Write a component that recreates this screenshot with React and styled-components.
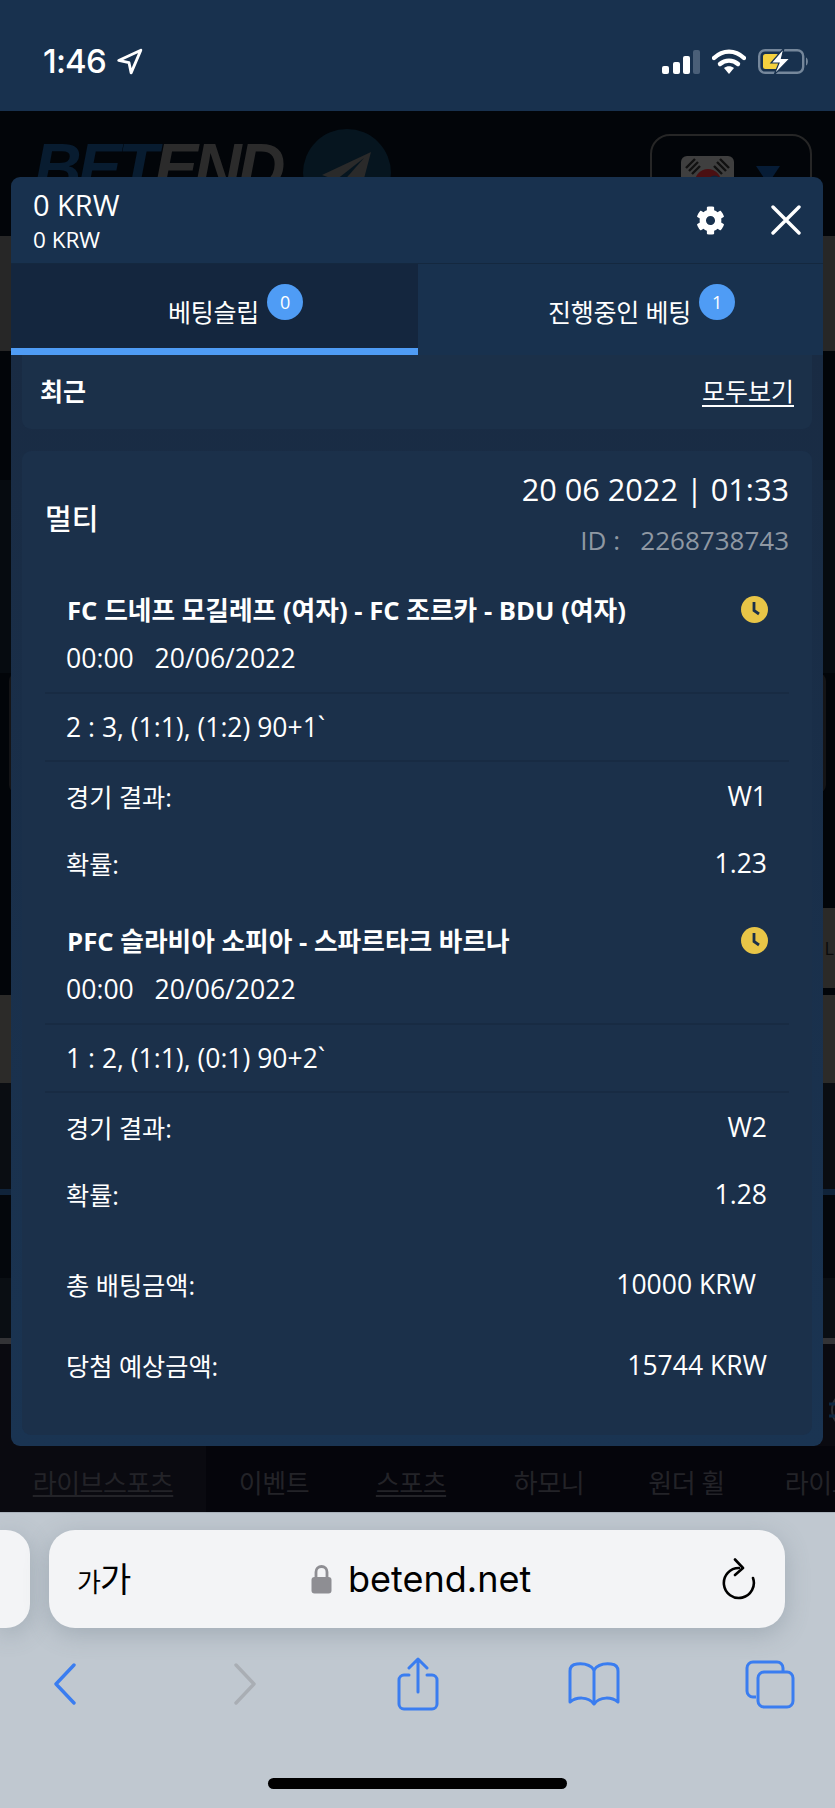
import React from "react";
import styled, { createGlobalStyle } from "styled-components";
import { FaCog } from "react-icons/fa";

const GlobalStyle = createGlobalStyle`
  html, body { margin: 0; padding: 0; background: #c0c8d0; }
  * { box-sizing: border-box; }
  body { font-family: "Open Sans", "Noto Sans CJK KR", sans-serif; }
`;

const Page = styled.div`
  width: 835px;
  height: 1808px;
  display: flex;
  flex-direction: column;
  overflow: hidden;
`;

// 상태바
const StatusBar = styled.div`
  height: 111px;
  background: #18314e;
  display: flex;
  justify-content: space-between;
  align-items: flex-start;
  padding: 48px 25px 0 43px;
`;
const TimeGroup = styled.div`
  display: flex;
  align-items: center;
  gap: 10px;
  height: 26px;
  font-family: Inter, sans-serif;
  font-size: 33px;
  font-weight: 500;
  letter-spacing: -0.8px;
  color: #fff;
`;
const StatusIcons = styled.div`
  display: flex;
  align-items: center;
  gap: 12px;
`;

// 모달 뒤의 어두운 페이지
const Backdrop = styled.div`
  position: relative;
  height: 1401px;
  display: flex;
  flex-direction: column;
  background: #020509;
`;
const Band = styled.div`
  height: ${(p) => p.$h}px;
  background: ${(p) => p.$bg || "transparent"};
  display: flex;
  justify-content: ${(p) => p.$justify || "flex-start"};
  align-items: center;
  flex-shrink: 0;
`;
const TopHeader = styled.div`
  height: 125px;
  flex-shrink: 0;
  display: flex;
  justify-content: space-between;
  padding: 18px 23px 0 34px;
`;
const LogoGroup = styled.div`
  display: flex;
  gap: 22px;
`;
const LogoText = styled.div`
  font-family: "Liberation Sans", sans-serif;
  font-style: italic;
  font-weight: 700;
  font-size: 66px;
  line-height: 66px;
  letter-spacing: -4px;
  margin-top: 5px;
  color: #2b2b2b;
  span { color: #081c30; }
`;
const LogoCircle = styled.div`
  width: 88px;
  height: 88px;
  border-radius: 50%;
  background: #06151f;
  display: flex;
  align-items: center;
  justify-content: center;
`;
const LangButton = styled.div`
  width: 162px;
  height: 90px;
  margin-top: 5px;
  border: 2px solid #262626;
  border-radius: 20px;
  display: flex;
  gap: 22px;
  padding: 20px 0 0 29px;
`;
const Flag = styled.div`
  width: 53px;
  height: 50px;
  border-radius: 6px;
  background: #3f3f3f;
  display: flex;
  align-items: center;
  justify-content: center;
`;
const Caret = styled.div`
  width: 0;
  height: 0;
  margin-top: 10px;
  border-left: 12px solid transparent;
  border-right: 12px solid transparent;
  border-top: 18px solid #061c36;
`;
const GhostBox = styled.div`
  height: 120px;
  flex-shrink: 0;
  margin: 0 9px;
  border-radius: 8px;
  background: #141416;
`;
const RightStrip = styled.div`
  width: 50%;
  height: 100%;
  background: #2b2a28;
  display: flex;
  justify-content: flex-end;
  align-items: center;
  padding-right: 1px;
  font-size: 18px;
  color: #0c0c0c;
`;
const BottomNav = styled.div`
  height: 66px;
  flex-shrink: 0;
  display: flex;
  background: #05050b;
  overflow: hidden;
`;
const NavItem = styled.div`
  flex-shrink: 0;
  width: ${(p) => p.$w}px;
  height: 100%;
  padding-top: 6px;
  background: ${(p) => (p.$active ? "#0a0a10" : "transparent")};
  display: flex;
  justify-content: center;
  align-items: center;
  font-size: 26px;
  letter-spacing: -0.5px;
  color: #232328;
  white-space: nowrap;
  span { text-decoration: ${(p) => (p.$under ? "underline" : "none")}; }
`;

// 베팅 모달
const Modal = styled.div`
  position: absolute;
  top: 66px;
  left: 11px;
  width: 812px;
  height: 1269px;
  border-radius: 9px;
  overflow: hidden;
  display: flex;
  flex-direction: column;
  color: #fff;
`;
const ModalHeader = styled.div`
  height: 87px;
  flex-shrink: 0;
  background: #18314e;
  border-bottom: 1px solid #14283f;
  display: flex;
  justify-content: space-between;
  align-items: center;
  padding: 0 22px 0 22px;
`;
const Balance = styled.div`
  display: flex;
  flex-direction: column;
`;
const BalanceMain = styled.div`
  font-size: 29px;
  line-height: 36px;
  margin-top: 1px;
`;
const BalanceSub = styled.div`
  font-size: 22.5px;
  line-height: 30px;
  margin-top: 2px;
`;
const HeaderIcons = styled.div`
  display: flex;
  align-items: center;
  gap: 46px;
`;
const Tabs = styled.div`
  height: 91px;
  flex-shrink: 0;
  display: flex;
`;
const Tab = styled.div`
  width: ${(p) => p.$w}px;
  background: ${(p) => (p.$active ? "#14263e" : "#18314e")};
  border-bottom: 7px solid ${(p) => (p.$active ? "#4f9cf5" : "transparent")};
  display: flex;
  justify-content: center;
  align-items: flex-start;
  gap: 8px;
  padding: 26px 0 0 42px;
  font-size: 25px;
  line-height: 44px;
  letter-spacing: -0.2px;
`;
const Badge = styled.div`
  width: 36px;
  height: 36px;
  margin-top: -6px;
  border-radius: 50%;
  background: #4f9cf5;
  display: flex;
  align-items: center;
  justify-content: center;
  font-size: 18px;
  line-height: 1;
`;
const ModalBody = styled.div`
  flex: 1;
  display: flex;
  flex-direction: column;
  gap: 22px;
  padding: 0 11px 11px;
  background: linear-gradient(#192b43, #1a3452);
`;
const RecentRow = styled.div`
  height: 74px;
  flex-shrink: 0;
  background: #1b3049;
  border-radius: 0 0 9px 9px;
  display: flex;
  justify-content: space-between;
  align-items: center;
  padding: 0 18px 4px 18px;
  font-size: 25px;
`;
const RecentTitle = styled.div`
  font-weight: 700;
`;
const SeeAll = styled.div`
  text-decoration: underline;
  text-underline-offset: 4px;
`;
const Card = styled.div`
  flex: 1;
  background: #1b304a;
  border-radius: 9px;
  padding: 16px 23px 0;
`;
const CardHead = styled.div`
  display: flex;
  justify-content: space-between;
  align-items: center;
`;
const CardType = styled.div`
  font-size: 29px;
  font-weight: 500;
  margin-top: 4px;
`;
const CardMeta = styled.div`
  display: flex;
  flex-direction: column;
  align-items: flex-end;
`;
const CardDate = styled.div`
  font-size: 30.7px;
  line-height: 44px;
  white-space: pre;
`;
const CardId = styled.div`
  font-size: 26px;
  line-height: 44px;
  margin-top: 7px;
  color: #8f98a3;
  white-space: pre;
`;
const Match = styled.div`
  margin-top: ${(p) => p.$top}px;
`;
const MatchTitle = styled.div`
  height: 40px;
  padding: 0 21px 0 22px;
  display: flex;
  justify-content: space-between;
  align-items: center;
  font-size: 25.7px;
  font-weight: 700;
`;
const MatchTime = styled.div`
  height: 40px;
  margin-top: 9px;
  padding: 0 21px;
  font-size: 26.6px;
  line-height: 40px;
  white-space: pre;
`;
const ScoreRow = styled.div`
  height: 70px;
  margin-top: 14px;
  padding: 0 21px;
  border-top: 2px solid #182b43;
  border-bottom: 2px solid #182b43;
  display: flex;
  align-items: center;
  font-size: 26.5px;
`;
const InfoRow = styled.div`
  height: ${(p) => p.$h || 67}px;
  padding: 0 ${(p) => p.$right || 22}px 0 21px;
  display: flex;
  justify-content: space-between;
  align-items: center;
  font-size: 26.5px;
`;
const InfoLabel = styled.span`
  font-size: 25.2px;
`;
const Summary = styled.div`
  margin-top: 16px;
`;

// 사파리 하단 바
const SafariBar = styled.div`
  height: 296px;
  background: #c0c8d0;
  border-top: 1px solid #a9b2bb;
  display: flex;
  flex-direction: column;
  align-items: center;
`;
const AddressRow = styled.div`
  width: 100%;
  height: 98px;
  margin-top: 17px;
  flex-shrink: 0;
  display: flex;
  gap: 19px;
`;
const PrevTab = styled.div`
  width: 30px;
  background: #f3f4f6;
  border-radius: 0 24px 24px 0;
  box-shadow: 0 6px 24px rgba(90, 105, 120, 0.3);
`;
const AddressBar = styled.div`
  width: 736px;
  background: #f3f4f6;
  border-radius: 26px;
  box-shadow: 0 6px 24px rgba(90, 105, 120, 0.3);
  display: flex;
  justify-content: space-between;
  align-items: center;
  padding: 0 29px 0 28px;
  color: #000;
`;
const FontSize = styled.div`
  font-size: 34px;
  line-height: 1;
  letter-spacing: -1px;
  span { font-size: 26px; }
`;
const Url = styled.div`
  display: flex;
  align-items: center;
  gap: 16px;
  margin-right: 10px;
  font-family: Inter, sans-serif;
  font-size: 36px;
`;
const ToolBar = styled.div`
  width: 100%;
  height: 56px;
  margin-top: 28px;
  flex-shrink: 0;
  display: flex;
  align-items: center;
`;
const ToolSlot = styled.div`
  display: flex;
  margin-left: ${(p) => p.$gap}px;
`;
const HomeBar = styled.div`
  width: 299px;
  height: 11px;
  margin-top: 66px;
  flex-shrink: 0;
  border-radius: 6px;
  background: #000;
`;

function LocationIcon() {
  return (
    <svg width="27" height="27" viewBox="0 0 25 25" fill="none">
      <path d="M23 2 L2.5 11.5 L12 13.5 L14 23 Z" stroke="#fff" strokeWidth="2.6" strokeLinejoin="round" />
    </svg>
  );
}

function SignalIcon() {
  return (
    <svg width="38" height="24" viewBox="0 0 38 24">
      <rect x="0" y="16" width="7" height="8" rx="2" fill="#fff" />
      <rect x="11" y="12" width="7" height="12" rx="2" fill="#fff" />
      <rect x="21" y="6" width="7" height="18" rx="2" fill="#fff" />
      <rect x="31" y="0" width="7" height="24" rx="2" fill="#4a5f78" />
    </svg>
  );
}

function WifiIcon() {
  return (
    <svg width="34" height="25" viewBox="0 0 34 25" fill="none">
      <path d="M2 9 C11 0.5 23 0.5 32 9" stroke="#fff" strokeWidth="4.4" strokeLinecap="round" />
      <path d="M8 15 C13 10.5 21 10.5 26 15" stroke="#fff" strokeWidth="4.4" strokeLinecap="round" />
      <path d="M12 19 L17 25 L22 19 C19 16.5 15 16.5 12 19 Z" fill="#fff" />
    </svg>
  );
}

function BatteryIcon() {
  return (
    <svg width="52" height="27" viewBox="0 0 52 27" fill="none">
      <rect x="1.2" y="2.2" width="44" height="22.6" rx="6" stroke="#75879b" strokeWidth="2.4" />
      <rect x="5" y="6" width="16" height="15" rx="2.5" fill="#f5d13f" />
      <path d="M48 9.5 C50.5 10.5 50.5 16.5 48 17.5 Z" fill="#75879b" />
      <path d="M26 0 L13 15 H21 L16 27 L32 10.5 H23.5 Z" fill="#fff" stroke="#18314e" strokeWidth="1.2" />
    </svg>
  );
}

function PlaneIcon() {
  return (
    <svg width="52" height="50" viewBox="0 0 52 50">
      <path d="M50 4 L1 27 L15 32 L17 47 L26 36 L40 42 Z" fill="#2a2a2a" />
      <path d="M43 10 L15 32 L20 36 Z" fill="#06151f" />
    </svg>
  );
}

function TaegukIcon() {
  return (
    <svg width="53" height="50" viewBox="0 0 53 50">
      <circle cx="27" cy="26" r="13" fill="#4a0f12" />
      <path d="M14 26 a13 13 0 0 0 26 0 a6.5 6.5 0 0 0 -13 0 a6.5 6.5 0 0 1 -13 0 Z" fill="#0f2238" />
      <g stroke="#111" strokeWidth="2.4">
        <path d="M5 12 L14 3 M8 15 L17 6 M11 18 L19 10" />
        <path d="M39 3 L48 12 M36 6 L45 15 M33 10 L41 18" />
      </g>
    </svg>
  );
}

function CloseIcon() {
  return (
    <svg width="30" height="30" viewBox="0 0 30 30">
      <path d="M2 2 L28 28 M28 2 L2 28" stroke="#fff" strokeWidth="3.4" strokeLinecap="round" />
    </svg>
  );
}

function ClockIcon() {
  return (
    <svg width="27" height="27" viewBox="0 0 27 27">
      <circle cx="13.5" cy="13.5" r="13.5" fill="#e8c547" />
      <path d="M13 6 V14.5 L18 18" stroke="#1b304a" strokeWidth="2.8" fill="none" />
    </svg>
  );
}

function GlobeEdge() {
  return (
    <svg width="6" height="40" viewBox="0 0 6 40" fill="none" style={{ marginTop: 30 }}>
      <circle cx="22" cy="20" r="19" stroke="#2b2e33" strokeWidth="2" />
      <path d="M0 14 H6 M0 26 H6" stroke="#0c2742" strokeWidth="3" />
    </svg>
  );
}

function LockIcon() {
  return (
    <svg width="21" height="30" viewBox="0 0 21 30" fill="none">
      <path d="M5 15 V8 a5.5 5.5 0 0 1 11 0 V15" stroke="#8e8e93" strokeWidth="2.8" />
      <rect x="0.5" y="13" width="20" height="16.5" rx="3" fill="#8e8e93" />
    </svg>
  );
}

function ReloadIcon() {
  return (
    <svg width="34" height="42" viewBox="0 0 34 42" fill="none">
      <path d="M17 10 A15 15 0 1 0 31 20" stroke="#000" strokeWidth="2.6" strokeLinecap="round" />
      <path d="M13 1.5 L21 10 L13 17" stroke="#000" strokeWidth="2.6" strokeLinecap="round" strokeLinejoin="round" />
    </svg>
  );
}

function ChevronIcon({ dir, color }) {
  const d = dir === "left" ? "M21 2 L3 21 L21 40" : "M3 2 L21 21 L3 40";
  return (
    <svg width="24" height="42" viewBox="0 0 24 42" fill="none">
      <path d={d} stroke={color} strokeWidth="3.4" strokeLinecap="round" strokeLinejoin="round" />
    </svg>
  );
}

function ShareIcon() {
  return (
    <svg width="42" height="54" viewBox="0 0 42 54" fill="none" stroke="#3a7df0" strokeWidth="3" strokeLinecap="round" strokeLinejoin="round">
      <path d="M12 18 H7 a5 5 0 0 0 -5 5 V47 a5 5 0 0 0 5 5 H35 a5 5 0 0 0 5 -5 V23 a5 5 0 0 0 -5 -5 H30" />
      <path d="M21 35 V2 M12 11 L21 2 L30 11" />
    </svg>
  );
}

function BookIcon() {
  return (
    <svg width="52" height="44" viewBox="0 0 52 44" fill="none" stroke="#3a7df0" strokeWidth="3" strokeLinejoin="round">
      <path d="M26 8 C22 2 14 1.5 9 2 C4 2.5 2 5 2 9 V40 C8 35 20 34 26 42 C32 34 44 35 50 40 V9 C50 5 48 2.5 43 2 C38 1.5 30 2 26 8 Z" />
      <path d="M26 8 V42" />
    </svg>
  );
}

function TabsIcon() {
  return (
    <svg width="50" height="49" viewBox="0 0 50 49" fill="none" stroke="#3a7df0" strokeWidth="3">
      <path d="M11 37 H8 a6 6 0 0 1 -6 -6 V8 a6 6 0 0 1 6 -6 H32 a6 6 0 0 1 6 6 V11" />
      <rect x="13" y="12" width="35" height="35" rx="6" />
    </svg>
  );
}

const matches = [
  { title: "FC 드네프 모길레프 (여자) - FC 조르카 - BDU (여자)", score: "2 : 3, (1:1), (1:2) 90+1`", result: "W1", odds: "1.23", top: 27 },
  { title: "PFC 슬라비아 소피아 - 스파르타크 바르나", score: "1 : 2, (1:1), (0:1) 90+2`", result: "W2", odds: "1.28", top: 24 },
];

const navItems = [
  { label: "라이브스포츠", w: 206, active: true, under: true },
  { label: "이벤트", w: 136 },
  { label: "스포츠", w: 138, under: true },
  { label: "하모니", w: 138 },
  { label: "원더 휠", w: 137 },
  { label: "라이브", w: 130 },
];

function App() {
  return (
    <Page>
      <GlobalStyle />
      <StatusBar>
        <TimeGroup>
          1:46
          <LocationIcon />
        </TimeGroup>
        <StatusIcons>
          <SignalIcon />
          <WifiIcon />
          <BatteryIcon />
        </StatusIcons>
      </StatusBar>

      <Backdrop>
        <TopHeader>
          <LogoGroup>
            <LogoText><span>BET</span>END</LogoText>
            <LogoCircle><PlaneIcon /></LogoCircle>
          </LogoGroup>
          <LangButton>
            <Flag><TaegukIcon /></Flag>
            <Caret />
          </LangButton>
        </TopHeader>
        <Band $h={115} $bg="#272727" />
        <Band $h={129} />
        <Band $h={193} $bg="#060b10" />
        <GhostBox />
        <Band $h={115} />
        <Band $h={80} $justify="flex-end"><RightStrip>L</RightStrip></Band>
        <Band $h={7} />
        <Band $h={88} $bg="#2c2b29" />
        <Band $h={106} $bg="#0a0d12" />
        <Band $h={6} $bg="#10233a" />
        <Band $h={83} $bg="#04070c" />
        <Band $h={60} $bg="#0a0e13" />
        <Band $h={6} $bg="#333336" />
        <Band $h={102} $bg="#0a0a10" $justify="flex-end"><GlobeEdge /></Band>
        <BottomNav>
          {navItems.map((item) => (
            <NavItem key={item.label} $w={item.w} $active={item.active} $under={item.under}>
              <span>{item.label}</span>
            </NavItem>
          ))}
        </BottomNav>

        <Modal>
          <ModalHeader>
            <Balance>
              <BalanceMain>0 KRW</BalanceMain>
              <BalanceSub>0 KRW</BalanceSub>
            </Balance>
            <HeaderIcons>
              <FaCog size={29} color="#fff" />
              <CloseIcon />
            </HeaderIcons>
          </ModalHeader>
          <Tabs>
            <Tab $w={407} $active>
              베팅슬립
              <Badge>0</Badge>
            </Tab>
            <Tab $w={405}>
              진행중인 베팅
              <Badge>1</Badge>
            </Tab>
          </Tabs>
          <ModalBody>
            <RecentRow>
              <RecentTitle>최근</RecentTitle>
              <SeeAll>모두보기</SeeAll>
            </RecentRow>
            <Card>
              <CardHead>
                <CardType>멀티</CardType>
                <CardMeta>
                  <CardDate>20 06 2022 | 01:33</CardDate>
                  <CardId>ID :   2268738743</CardId>
                </CardMeta>
              </CardHead>
              {matches.map((m) => (
                <Match key={m.result} $top={m.top}>
                  <MatchTitle>
                    {m.title}
                    <ClockIcon />
                  </MatchTitle>
                  <MatchTime>00:00   20/06/2022</MatchTime>
                  <ScoreRow>{m.score}</ScoreRow>
                  <InfoRow>
                    <InfoLabel>경기 결과:</InfoLabel>
                    <span>{m.result}</span>
                  </InfoRow>
                  <InfoRow>
                    <InfoLabel>확률:</InfoLabel>
                    <span>{m.odds}</span>
                  </InfoRow>
                </Match>
              ))}
              <Summary>
                <InfoRow $h={81} $right={33}>
                  <InfoLabel>총 배팅금액:</InfoLabel>
                  <span>10000 KRW</span>
                </InfoRow>
                <InfoRow $h={81}>
                  <InfoLabel>당첨 예상금액:</InfoLabel>
                  <span>15744 KRW</span>
                </InfoRow>
              </Summary>
            </Card>
          </ModalBody>
        </Modal>
      </Backdrop>

      <SafariBar>
        <AddressRow>
          <PrevTab />
          <AddressBar>
            <FontSize><span>가</span>가</FontSize>
            <Url>
              <LockIcon />
              betend.net
            </Url>
            <ReloadIcon />
          </AddressBar>
        </AddressRow>
        <ToolBar>
          <ToolSlot $gap={53}><ChevronIcon dir="left" color="#3a7df0" /></ToolSlot>
          <ToolSlot $gap={156}><ChevronIcon dir="right" color="#a9aeb4" /></ToolSlot>
          <ToolSlot $gap={140}><ShareIcon /></ToolSlot>
          <ToolSlot $gap={129}><BookIcon /></ToolSlot>
          <ToolSlot $gap={125}><TabsIcon /></ToolSlot>
        </ToolBar>
        <HomeBar />
      </SafariBar>
    </Page>
  );
}

export default App;
